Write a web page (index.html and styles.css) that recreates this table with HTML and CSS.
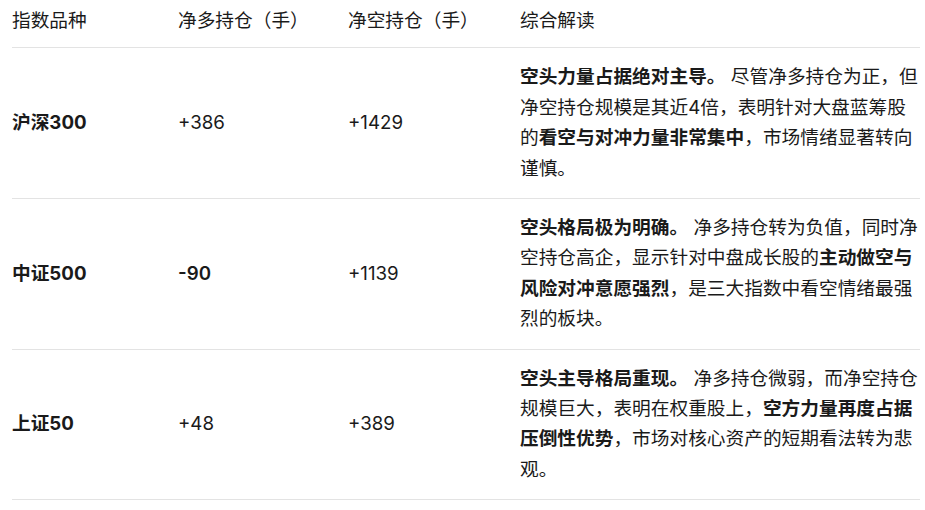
FILE: index.html
```html
<!DOCTYPE html>
<html lang="zh-CN">
<head>
<meta charset="utf-8">
<link rel="stylesheet" href="styles.css">
</head>
<body>
<table class="data-table">
  <thead>
    <tr>
      <th class="col-name">指数品种</th>
      <th class="col-long">净多持仓（手）</th>
      <th class="col-short">净空持仓（手）</th>
      <th class="col-note">综合解读</th>
    </tr>
  </thead>
  <tbody>
    <tr>
      <td class="name">沪深300</td>
      <td>+386</td>
      <td>+1429</td>
      <td class="note"><strong>空头力量占据绝对主导。</strong> 尽管净多持仓为正，但净空持仓规模是其近4倍，表明针对大盘蓝筹股的<strong>看空与对冲力量非常集中</strong>，市场情绪显著转向谨慎。</td>
    </tr>
    <tr>
      <td class="name">中证500</td>
      <td class="neg">-90</td>
      <td>+1139</td>
      <td class="note"><strong>空头格局极为明确。</strong> 净多持仓转为负值，同时净空持仓高企，显示针对中盘成长股的<strong>主动做空与风险对冲意愿强烈</strong>，是三大指数中看空情绪最强烈的板块。</td>
    </tr>
    <tr>
      <td class="name">上证50</td>
      <td>+48</td>
      <td>+389</td>
      <td class="note"><strong>空头主导格局重现。</strong> 净多持仓微弱，而净空持仓规模巨大，表明在权重股上，<strong>空方力量再度占据压倒性优势</strong>，市场对核心资产的短期看法转为悲观。</td>
    </tr>
  </tbody>
</table>
</body>
</html>
```

FILE: styles.css
```css
html, body {
  margin: 0;
  padding: 0;
  background: #ffffff;
}

body {
  font-family: "Inter", "Noto Sans CJK SC", sans-serif;
  font-size: 18.7px;
  line-height: 30.4px;
  color: #1a1a1a;
}

.data-table {
  margin-left: 12px;
  border-collapse: collapse;
  width: 908px;
  table-layout: fixed;
}

.data-table th {
  font-weight: 400;
  text-align: left;
  padding: 6px 0 11px 0;
  border-bottom: 1px solid #e3e3e3;
  vertical-align: middle;
}

.col-name { width: 166px; }
.col-long { width: 170px; }
.col-short { width: 172px; }
.col-note { width: 400px; }

.data-table td {
  padding: 14px 0 14px 0;
  border-bottom: 1px solid #e3e3e3;
  vertical-align: middle;
}

.data-table td.name {
  font-weight: 700;
}

.data-table td.neg {
  font-weight: 600;
}

.data-table td.note strong {
  font-weight: 700;
}
```
